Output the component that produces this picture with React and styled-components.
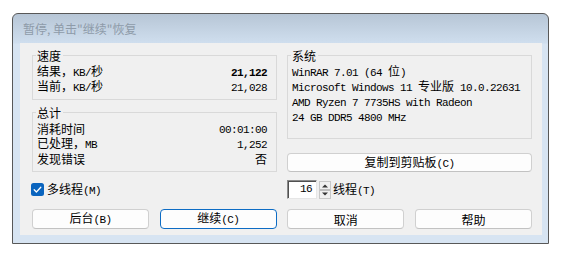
import React from "react";
import styled, { createGlobalStyle } from "styled-components";

const GlobalStyle = createGlobalStyle`
  html, body { margin: 0; padding: 0; background: #ffffff; }
  body {
    font-family: "Noto Sans CJK SC", "Liberation Sans", sans-serif;
    font-size: 12px;
    color: #000;
  }
  * { box-sizing: border-box; }
`;

const Han = styled.span`
  font-family: "Noto Sans CJK SC", sans-serif;
  font-size: 12px;
`;

const Latin = styled.span`
  font-family: "Liberation Mono", "DejaVu Sans Mono", monospace;
  font-size: 11px;
  letter-spacing: -0.6px;
  font-weight: ${(p) => (p.$bold ? 700 : 400)};
  white-space: pre;
`;

function Mixed({ text, bold }) {
  const parts = text.split(/([\u2e80-\u9fff\uff00-\uffef\u3000-\u303f]+)/);
  return parts.map((p, i) =>
    p === "" ? null : i % 2 ? (
      <Han key={i}>{p}</Han>
    ) : (
      <Latin key={i} $bold={bold}>
        {p}
      </Latin>
    )
  );
}

const Window = styled.div`
  margin: 13px 0 0 12px;
  width: 537px;
  height: 231px;
  border: 1px solid #585858;
  border-radius: 6px 6px 0 0;
  background: linear-gradient(
    to bottom,
    #b7c6d6 0px,
    #cfdeee 29px,
    #d7e4f2 30px,
    #d7e4f2 100%
  );
  display: flex;
  flex-direction: column;
`;

const TitleBar = styled.div`
  height: 29px;
  padding-left: 10px;
  display: flex;
  align-items: center;
  color: #8e9ba9;
  font-size: 12px;
  font-family: "Noto Sans CJK SC", sans-serif;
`;

const Client = styled.div`
  margin: 0 6px 8px 7px;
  height: 192px;
  background: #f0f0f0;
  padding: 5px 10px 6px 12px;
  display: flex;
  flex-direction: column;
`;

const TwoCols = styled.div`
  display: grid;
  grid-template-columns: 245px 245px;
  column-gap: 10px;
  height: ${(p) => p.$h}px;
  margin-top: ${(p) => p.$mt || 0}px;
  align-items: ${(p) => p.$align || "stretch"};
`;

const Stack = styled.div`
  display: flex;
  flex-direction: column;
  gap: ${(p) => p.$gap}px;
`;

const Group = styled.fieldset`
  margin: 0;
  padding: 1px 9px ${(p) => p.$pb}px 4px;
  border: 1px solid #d9d9d9;
  min-width: 0;
`;

const Legend = styled.legend`
  padding: 0 2px 0 1px;
  margin-left: -1px;
  line-height: 15px;
  height: 15px;
`;

const Row = styled.div`
  display: flex;
  justify-content: space-between;
  align-items: center;
  height: 15px;
  line-height: 15px;
  white-space: nowrap;
`;

const Button = styled.div`
  height: ${(p) => p.$h || 20}px;
  border: 1px solid ${(p) => (p.$focused ? "#0d6cc4" : "#d0d0d0")};
  border-bottom-color: ${(p) => (p.$focused ? "#0d6cc4" : "#c2c2c2")};
  border-radius: 4px;
  background: #fdfdfd;
  display: flex;
  align-items: center;
  justify-content: center;
  line-height: 15px;
  white-space: nowrap;
`;

const ButtonRow = styled.div`
  display: grid;
  grid-template-columns: repeat(4, 117px);
  justify-content: space-between;
  height: 20px;
  margin-top: 10px;
`;

const Inline = styled.div`
  display: flex;
  align-items: center;
  gap: ${(p) => p.$gap || 0}px;
  height: 19px;
  line-height: 15px;
  white-space: nowrap;
`;

const CheckBox = styled.svg`
  display: block;
  margin-left: -1px;
  margin-right: 3px;
`;

const Edit = styled.div`
  width: 30px;
  height: 19px;
  background: #fff;
  border: 1px solid;
  border-color: #8a8a8a #e6e6e6 #e6e6e6 #8a8a8a;
  box-shadow: inset 1px 1px 0 #505050;
  display: flex;
  align-items: center;
  justify-content: flex-end;
  padding-right: 4px;
`;

const Spin = styled.svg`
  display: block;
  margin: 0 2px 0 2px;
`;

function App() {
  return (
    <>
      <GlobalStyle />
      <Window>
        <TitleBar>暂停, 单击"继续"恢复</TitleBar>
        <Client>
          <TwoCols $h={124}>
            <Stack $gap={5}>
              <Group $pb={5}>
                <Legend>
                  <Han>速度</Han>
                </Legend>
                <Row>
                  <span>
                    <Mixed text="结果，KB/秒" />
                  </span>
                  <span>
                    <Mixed text="21,122" bold />
                  </span>
                </Row>
                <Row>
                  <span>
                    <Mixed text="当前，KB/秒" />
                  </span>
                  <span>
                    <Mixed text="21,028" />
                  </span>
                </Row>
              </Group>
              <Group $pb={5}>
                <Legend>
                  <Han>总计</Han>
                </Legend>
                <Row>
                  <span>
                    <Mixed text="消耗时间" />
                  </span>
                  <span>
                    <Mixed text="00:01:00" />
                  </span>
                </Row>
                <Row>
                  <span>
                    <Mixed text="已处理，MB" />
                  </span>
                  <span>
                    <Mixed text="1,252" />
                  </span>
                </Row>
                <Row>
                  <span>
                    <Mixed text="发现错误" />
                  </span>
                  <span>
                    <Mixed text="否" />
                  </span>
                </Row>
              </Group>
            </Stack>
            <Stack $gap={14}>
              <Group $pb={14}>
                <Legend>
                  <Han>系统</Han>
                </Legend>
                <Row>
                  <span>
                    <Mixed text="WinRAR 7.01 (64 位)" />
                  </span>
                </Row>
                <Row>
                  <span>
                    <Mixed text="Microsoft Windows 11 专业版 10.0.22631" />
                  </span>
                </Row>
                <Row>
                  <span>
                    <Mixed text="AMD Ryzen 7 7735HS with Radeon" />
                  </span>
                </Row>
                <Row>
                  <span>
                    <Mixed text="24 GB DDR5 4800 MHz" />
                  </span>
                </Row>
              </Group>
              <Button $h={19}>
                <span>
                  <Mixed text="复制到剪贴板(C)" />
                </span>
              </Button>
            </Stack>
          </TwoCols>
          <TwoCols $h={19} $mt={8} $align="center">
            <Inline>
              <CheckBox width="13" height="13" viewBox="0 0 13 13">
                <rect x="0" y="0" width="13" height="13" rx="2.5" fill="#0a64be" />
                <polyline
                  points="3.2,6.8 5.4,9 9.8,4.2"
                  fill="none"
                  stroke="#ffffff"
                  strokeWidth="1.3"
                  strokeLinecap="round"
                  strokeLinejoin="round"
                />
              </CheckBox>
              <span>
                <Mixed text="多线程(M)" />
              </span>
            </Inline>
            <Inline>
              <Edit>
                <Mixed text="16" />
              </Edit>
              <Spin width="12" height="18" viewBox="0 0 12 18">
                <rect x="0.5" y="0.5" width="11" height="17" fill="#f0f0f0" stroke="#c8c8c8" />
                <line x1="1" y1="9" x2="11" y2="9" stroke="#8a8a8a" />
                <polygon points="3,6.5 9,6.5 6,3.5" fill="#333" />
                <polygon points="3,11.5 9,11.5 6,14.5" fill="#333" />
              </Spin>
              <span>
                <Mixed text="线程(T)" />
              </span>
            </Inline>
          </TwoCols>
          <ButtonRow>
            <Button>
              <span>
                <Mixed text="后台(B)" />
              </span>
            </Button>
            <Button $focused>
              <span>
                <Mixed text="继续(C)" />
              </span>
            </Button>
            <Button>
              <span>
                <Mixed text="取消" />
              </span>
            </Button>
            <Button>
              <span>
                <Mixed text="帮助" />
              </span>
            </Button>
          </ButtonRow>
        </Client>
      </Window>
    </>
  );
}

export default App;
